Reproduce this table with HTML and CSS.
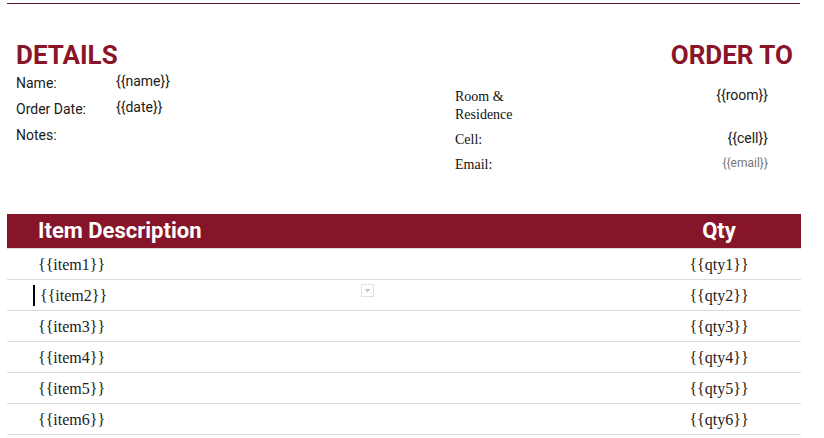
FILE: index.html
```html
<!DOCTYPE html>
<html>
<head>
<meta charset="utf-8">
<link rel="stylesheet" href="styles.css">
</head>
<body>
<div class="page">
  <div class="rule"></div>
  <div class="info">
    <div class="details">
      <h1 class="title">DETAILS</h1>
      <div class="drow"><span class="dlabel">Name:</span><span class="dval">{{name}}</span></div>
      <div class="drow"><span class="dlabel">Order Date:</span><span class="dval">{{date}}</span></div>
      <div class="drow"><span class="dlabel">Notes:</span></div>
    </div>
    <div class="orderto">
      <h1 class="title right">ORDER TO</h1>
      <div class="orows">
        <div class="orow"><span class="olabel">Room &amp; Residence</span><span class="oval">{{room}}</span></div>
        <div class="orow"><span class="olabel">Cell:</span><span class="oval">{{cell}}</span></div>
        <div class="orow"><span class="olabel">Email:</span><span class="oval small">{{email}}</span></div>
      </div>
    </div>
  </div>
  <div class="table">
    <div class="thead">
      <div class="th th-item">Item Description</div>
      <div class="th th-qty">Qty</div>
    </div>
    <div class="tbody">
      <div class="tr"><div class="td item">{{item1}}</div><div class="td qty">{{qty1}}</div></div>
      <div class="tr"><div class="td item"><span class="caret"></span>{{item2}}</div><div class="td qty">{{qty2}}</div>
        <div class="dropdown"><svg width="11" height="11" viewBox="0 0 11 11"><path d="M2.5 4 H8.5 L5.5 7.5 Z" fill="#c4c4c4"/></svg></div>
      </div>
      <div class="tr"><div class="td item">{{item3}}</div><div class="td qty">{{qty3}}</div></div>
      <div class="tr"><div class="td item">{{item4}}</div><div class="td qty">{{qty4}}</div></div>
      <div class="tr"><div class="td item">{{item5}}</div><div class="td qty">{{qty5}}</div></div>
      <div class="tr"><div class="td item">{{item6}}</div><div class="td qty">{{qty6}}</div></div>
    </div>
  </div>
</div>
</body>
</html>
```
FILE: styles.css
```css
html, body {
  margin: 0;
  padding: 0;
  background: #ffffff;
}
.page {
  margin: 0 0 0 7px;
  width: 794px;
  font-family: Roboto, "Liberation Sans", sans-serif;
  color: #1a1a1a;
}
.rule {
  margin-top: 3px;
  width: 793px;
  height: 1px;
  background: #5e1a26;
}
.info {
  display: flex;
  justify-content: space-between;
  margin-top: 36px;
}
.title {
  margin: 0;
  font-family: Roboto, sans-serif;
  font-weight: 700;
  font-size: 26px;
  line-height: 30px;
  color: #8a1528;
}
.title.right {
  text-align: right;
}
.details {
  padding-left: 9px;
  width: 400px;
}
.drow {
  display: flex;
  align-items: flex-start;
  font-size: 14px;
}
.dlabel {
  width: 100px;
  line-height: 26px;
}
.dval {
  line-height: 22px;
}
.orderto {
  width: 338px;
  padding-right: 8px;
}
.orows {
  margin-top: 18px;
  display: flex;
  flex-direction: column;
  gap: 7px;
  padding-right: 25px;
}
.orow {
  display: flex;
  justify-content: space-between;
  align-items: flex-start;
}
.olabel {
  width: 72px;
  font-family: "Liberation Serif", "Times New Roman", serif;
  font-size: 14px;
  line-height: 18px;
  color: #111;
}
.oval {
  font-size: 14px;
  line-height: 14px;
  color: #1a1a1a;
}
.oval.small {
  font-size: 12px;
  color: #777;
}
.table {
  margin-top: 40px;
  width: 794px;
}
.thead {
  display: grid;
  grid-template-columns: 630px 164px;
  height: 34px;
  background: #86152a;
  color: #ffffff;
  font-weight: 700;
  font-size: 22px;
  line-height: 34px;
}
.th-item {
  padding-left: 31px;
}
.th-qty {
  text-align: center;
}
.tbody {
  border-top: 1px solid #dadada;
}
.tr {
  position: relative;
  display: grid;
  grid-template-columns: 630px 164px;
  height: 30px;
  border-bottom: 1px solid #dadada;
  font-family: "Liberation Serif", "Times New Roman", serif;
  font-size: 16px;
  line-height: 30px;
  color: #222;
}
.td {
  padding-top: 1px;
}
.item {
  padding-left: 31px;
}
.qty {
  text-align: center;
}
.caret {
  display: inline-block;
  width: 2px;
  height: 21px;
  background: #000;
  vertical-align: -5px;
  margin-left: -5px;
  margin-right: 5px;
}
.dropdown {
  position: absolute;
  left: 354px;
  top: 4px;
  width: 11px;
  height: 11px;
  border: 1px solid #e2e2e2;
  display: flex;
}
```
